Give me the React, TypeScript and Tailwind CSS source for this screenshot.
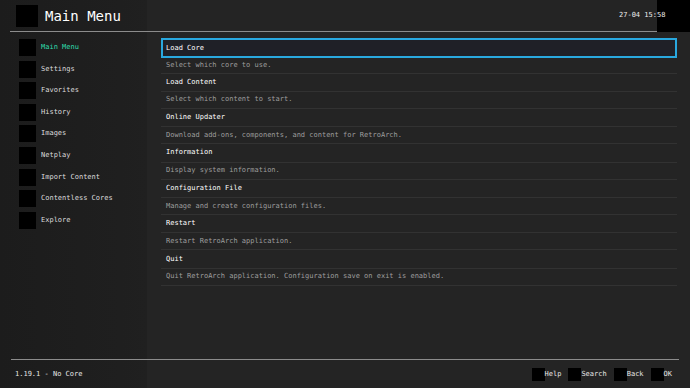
const sideItems = [
  "Main Menu",
  "Settings",
  "Favorites",
  "History",
  "Images",
  "Netplay",
  "Import Content",
  "Contentless Cores",
  "Explore",
];

const entries = [
  { title: "Load Core", desc: "Select which core to use." },
  { title: "Load Content", desc: "Select which content to start." },
  { title: "Online Updater", desc: "Download add-ons, components, and content for RetroArch." },
  { title: "Information", desc: "Display system information." },
  { title: "Configuration File", desc: "Manage and create configuration files." },
  { title: "Restart", desc: "Restart RetroArch application." },
  { title: "Quit", desc: "Quit RetroArch application. Configuration save on exit is enabled." },
];

const buttons = ["Help", "Search", "Back", "OK"];

export default function App() {
  return (
    <div
      className="w-[690px] h-[388px] flex flex-col overflow-hidden text-[7px] leading-none text-[#e6e6e6] bg-[linear-gradient(to_right,#1c1c1c_0px,#1f1f1f_120px,#202020_147px,#242424_147px)]"
      style={{ fontFamily: '"DejaVu Sans Mono", "Liberation Mono", monospace' }}
    >
      {/* header */}
      <div className="relative flex h-[32px] shrink-0">
        <div className="flex-1 ml-[10px] border-b border-[#8c8c8c] flex items-center">
          <div className="ml-[6px] w-[22px] h-[22px] bg-black" />
          <div className="ml-[7px] text-[14px] text-white">Main Menu</div>
        </div>
        <div className="w-[33px] bg-black" />
        <div className="absolute left-[619px] top-[12px] text-[7px] text-[#eeeeee]">27-04 15:58</div>
      </div>

      {/* body */}
      <div className="flex flex-1 min-h-0">
        <div className="w-[147px] shrink-0 pt-[7px] pl-[19px] flex flex-col">
          {sideItems.map((name, i) => (
            <div key={name} className="h-[21.6px] flex items-start">
              <div className="w-[17px] h-[17px] bg-black shrink-0" />
              <div
                className={
                  "ml-[5px] h-[17px] flex items-center " +
                  (i === 0 ? "text-[#2fdcab]" : "text-[#dcdcdc]")
                }
              >
                {name}
              </div>
            </div>
          ))}
        </div>

        <div className="flex-1 pl-[14px] pr-[13px] pt-[6px] flex flex-col">
          {entries.map((e, i) =>
            i === 0 ? (
              <div key={e.title}>
                <div className="h-[20px] border-2 border-[#29a8df] bg-[#1f2027] flex items-center pl-[3px] text-white">
                  {e.title}
                </div>
                <div className="h-[15.6px] border-b border-[#323232] flex items-center pl-[5px] text-[#9e9e9e]">
                  {e.desc}
                </div>
              </div>
            ) : (
              <div key={e.title}>
                <div className="h-[18.2px] border-b border-[#323232] flex items-center pl-[5px] text-white">
                  {e.title}
                </div>
                <div className="h-[17.2px] border-b border-[#323232] flex items-center pl-[5px] text-[#9e9e9e]">
                  {e.desc}
                </div>
              </div>
            )
          )}
        </div>
      </div>

      {/* footer */}
      <div className="h-[29px] shrink-0 mx-[11px] border-t border-[#8c8c8c] flex items-center">
        <div className="pl-[4px] text-[#e6e6e6]">1.19.1 - No Core</div>
        <div className="ml-auto pr-[7px] flex items-center gap-[7px]">
          {buttons.map((b) => (
            <div key={b} className="flex items-center">
              <div className="w-[13px] h-[13px] bg-black" />
              <div className="text-[#e6e6e6]">{b}</div>
            </div>
          ))}
        </div>
      </div>
    </div>
  );
}
